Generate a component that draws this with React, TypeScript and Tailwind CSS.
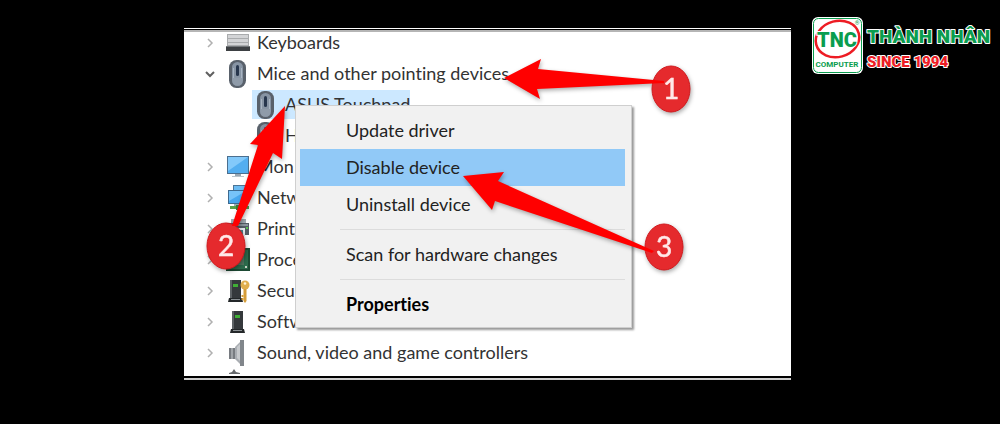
import { ReactNode } from 'react';

type IconName = 'keyboard' | 'mouse' | 'monitor' | 'network' | 'printer' | 'chip' | 'security' | 'software' | 'sound';

interface Device {
  name: string;
  icon: IconName;
  open?: boolean;
  children?: { name: string; selected?: boolean }[];
}

const devices: Device[] = [
  { name: 'Keyboards', icon: 'keyboard' },
  {
    name: 'Mice and other pointing devices',
    icon: 'mouse',
    open: true,
    children: [{ name: 'ASUS Touchpad', selected: true }, { name: 'H' }],
  },
  { name: 'Mon', icon: 'monitor' },
  { name: 'Netw', icon: 'network' },
  { name: 'Print', icon: 'printer' },
  { name: 'Proce', icon: 'chip' },
  { name: 'Secur', icon: 'security' },
  { name: 'Softw', icon: 'software' },
  { name: 'Sound, video and game controllers', icon: 'sound' },
];

const tower = (
  <>
    <path d="M6 3h11v18H6z" fill="#35393c" />
    <path d="M6 3h2v18H6z" fill="#5d6265" />
    <path d="M9 7h5v3H9z" fill="#3fae35" />
    <path d="M5 21h13l1 4H4z" fill="#24282a" />
    <path d="M7 22h9v1H7z" fill="#8a9093" />
  </>
);

const drawings: Record<IconName, ReactNode> = {
  keyboard: (
    <>
      <path d="M1 5h22v13H1z" fill="#a9abad" />
      <path d="M2 6h20v3H2zM2 10h20v3H2zM2 14h20v2H2z" fill="#d3d4d6" />
      <path d="M0 18h24v4H0z" fill="#3d4043" />
      <path d="M0 17h24v1H0z" fill="#73777a" />
    </>
  ),
  mouse: (
    <>
      <rect x="3" y="0" width="17" height="28" rx="7.5" fill="#59616b" />
      <rect x="6" y="2" width="11" height="24" rx="5.5" fill="#8794a4" />
      <path d="M6.500 16.500q5 3 10 0v4q0 5-5 5t-5-5z" fill="#8f9ba9" />
      <rect x="10" y="5" width="3" height="11" rx="1.500" fill="#27364d" />
      <path d="M7.500 8v10M15.500 8v10" stroke="#a9b5c2" />
    </>
  ),
  monitor: (
    <>
      <rect x="1.500" y="3.500" width="21" height="17" fill="#53aef0" stroke="#4b6f8f" />
      <path d="M2 4h20L2 18z" fill="#83c9fa" />
      <path d="M9 21h6v2H9z" fill="#9aa8b3" />
      <path d="M6 23h12v1H6z" fill="#bac4cb" />
    </>
  ),
  network: (
    <>
      <rect x="7.500" y="1.500" width="16" height="12" fill="#6cbcf3" stroke="#4d7595" />
      <rect x="2.500" y="6.500" width="19" height="13" fill="#48a7ee" stroke="#3e6a8f" />
      <path d="M3 7h17L3 17z" fill="#77c3f8" />
      <path d="M8 20h8v2H8z" fill="#9ba9b2" />
      <path d="M4 22h19v3H4z" fill="#57a34c" />
      <path d="M10 21h5v5h-5z" fill="#3c7f38" />
    </>
  ),
  printer: (
    <>
      <path d="M5 4h15v5H5z" fill="#a4adb4" />
      <path d="M1 8h22v12H1z" fill="#545d66" />
      <path d="M2 9h20v2H2z" fill="#8b959d" />
      <path d="M6 13h13v8H6z" fill="#e3e9ed" />
      <path d="M8 15h9v4H8z" fill="#4d7c86" />
      <path d="M20 12h2v2h-2z" fill="#5cc451" />
    </>
  ),
  chip: (
    <>
      <path d="M1 3h22v21H1z" fill="#2c6b4c" />
      <path d="M1 3h22v21H1z" fill="none" stroke="#1d4a34" strokeWidth="2" />
      <path d="M6 8h12v11H6z" fill="#52765f" />
      <path d="M3 5h2v2H3zM19 20h2v2h-2z" fill="#c7d3c4" />
    </>
  ),
  security: (
    <>
      <g transform="translate(-2 0)">{tower}</g>
      <circle cx="19" cy="8" r="4.500" fill="#e0ae4e" />
      <circle cx="19" cy="6.500" r="1.300" fill="#fff4d6" />
      <path d="M17.500 12h3v12l-1.500 2-1.500-2z" fill="#d69d38" />
      <path d="M15.500 18h2v2h-2zM15.500 21h2v2h-2z" fill="#d69d38" />
    </>
  ),
  software: tower,
  sound: (
    <>
      <path d="M3 9h6v11H3z" fill="#777b80" />
      <path d="M9 8l7-7v26l-7-7z" fill="#a9adb2" />
      <path d="M14 1h4v26h-4z" fill="#81868b" />
      <path d="M11 8l3-3v17l-3-3z" fill="#c6c9cc" />
      <path d="M5 9h2v11H5z" fill="#a0a4a8" />
    </>
  ),
};

function DeviceIcon({ name }: { name: IconName }) {
  return (
    <svg className="h-7 w-6 shrink-0 overflow-visible" viewBox="0 0 24 28" aria-hidden="true">
      {drawings[name]}
    </svg>
  );
}

function Chevron({ open }: { open?: boolean }) {
  return (
    <svg className="h-3 w-3" viewBox="0 0 12 12" fill="none" aria-hidden="true">
      {open ? (
        <path d="M2 4l4 4 4-4" stroke="#606060" strokeWidth="2" />
      ) : (
        <path d="M4 2l4 4-4 4" stroke="#b0b0b0" strokeWidth="1.500" />
      )}
    </svg>
  );
}

function DeviceTree() {
  return (
    <ul className="-mt-[5px] text-[18px] text-[#333]">
      {devices.map((device) => (
        <li key={device.name}>
          <div className="flex h-[31px] items-center pl-5">
            <button type="button" aria-label={`Toggle ${device.name}`} className="mr-2.5 w-3">
              <Chevron open={device.open} />
            </button>
            <DeviceIcon name={device.icon} />
            <span className="ml-[7px] whitespace-nowrap">{device.name}</span>
          </div>
          {device.children && (
            <ul className="pl-[68px]">
              {device.children.map((child) => (
                <li key={child.name} className="flex h-[31px] items-center">
                  <div className={`flex h-[29px] items-center pl-0.5 ${child.selected ? 'bg-[#cce8ff]' : ''}`}>
                    <DeviceIcon name="mouse" />
                    <span className="ml-[7px] whitespace-nowrap">{child.name}</span>
                  </div>
                </li>
              ))}
            </ul>
          )}
        </li>
      ))}
      <li className="h-2 pl-[42px]">
        <svg className="h-2 w-6" viewBox="0 0 24 8" aria-hidden="true">
          <path d="M3 5l3-1 2-3 2 3 4 1v1H3z" fill="#66696c" />
        </svg>
      </li>
    </ul>
  );
}

function MenuItem({ children, className = '' }: { children: ReactNode; className?: string }) {
  return (
    <button type="button" role="menuitem" className={`block h-[37px] w-full pl-[46px] text-left whitespace-nowrap ${className}`}>
      {children}
    </button>
  );
}

function ContextMenu() {
  return (
    <div
      role="menu"
      className="absolute top-[73px] left-[111px] w-[337px] border border-[#cfcfcf] bg-[#f1f1f1] pt-1.5 pr-1.5 pb-1 pl-1 text-[18px] text-[#222] shadow-[2px_2px_2px_#999]"
    >
      <MenuItem>Update driver</MenuItem>
      <MenuItem className="bg-[#91c9f7]">Disable device</MenuItem>
      <MenuItem>Uninstall device</MenuItem>
      <hr className="my-1.5 ml-10 border-[#dcdcdc]" />
      <MenuItem>Scan for hardware changes</MenuItem>
      <hr className="my-1.5 ml-10 border-[#dcdcdc]" />
      <MenuItem className="font-bold text-black">Properties</MenuItem>
    </div>
  );
}

const steps = [
  { label: '1', cx: 487, cy: 57, arrow: '320,46 357,27 354,37 480,49 480,51 353,57 356,67' },
  { label: '2', cx: 42, cy: 214, arrow: '101,74 66,112 74,113 48,194 54,194 89,121 98,127' },
  { label: '3', cx: 480, cy: 215, arrow: '279,144 320,140 314,149 470,219 468,221 311,169 308,178' },
];

function Annotations() {
  return (
    <svg className="pointer-events-none absolute top-0 left-0 h-[345px] w-[607px] drop-shadow-[1px_2px_2px_#00000055]" viewBox="0 0 607 345">
      {steps.map((step) => (
        <g key={step.label}>
          <ellipse cx={step.cx} cy={step.cy} rx="19" ry="23" fill="#e52a2d" stroke="#d1181c" />
          <polygon points={step.arrow} fill="#ff0000" />
          <text x={step.cx} y={step.cy + 10} textAnchor="middle" fontSize="28" fill="#ffe9e9" stroke="#ffe9e9" strokeWidth="0.500">
            {step.label}
          </text>
        </g>
      ))}
    </svg>
  );
}

function Logo() {
  return (
    <div className="flex items-start gap-1">
      <svg className="h-[57px] w-[51px] shrink-0" viewBox="0 0 51 57" fontFamily="Roboto, sans-serif" textAnchor="middle">
        <rect width="51" height="57" rx="6" fill="#fff" />
        <rect x="1.500" y="1.500" width="48" height="54" rx="5" fill="none" stroke="#0a9d4f" />
        <ellipse cx="25.500" cy="22" rx="22" ry="18" fill="none" stroke="#ed1c24" strokeWidth="2.500" transform="rotate(-15 25.500 22)" />
        <text x="25" y="30" fontSize="20" fontWeight="900" fill="#0a9d4f" stroke="#fff" strokeWidth="2" paintOrder="stroke">
          TNC
        </text>
        <text x="25" y="50" fontSize="8" fontWeight="700" fill="#0a9d4f">
          COMPUTER
        </text>
        <text x="45" y="8" fontSize="6" fill="#0a9d4f">
          ®
        </text>
      </svg>
      <svg className="h-[57px] w-[126px] shrink-0 overflow-visible" viewBox="0 0 126 57" fontFamily="Roboto, sans-serif" fontWeight="900" stroke="#fff" strokeWidth="2" paintOrder="stroke" strokeLinejoin="round">
        <text x="0" y="26" fontSize="19" fill="#0a9d4f">
          THÀNH NHÂN
        </text>
        <text x="0" y="50" fontSize="15" fill="#ed1c24">
          SINCE 1994
        </text>
      </svg>
    </div>
  );
}

export default function App() {
  return (
    <div className="grid min-h-screen grid-cols-[184px_1fr_209px] items-start bg-black font-['Lato','Noto_Sans',sans-serif] [font-variant-ligatures:none]">
      <main className="col-start-2 mt-7 border-t border-b-2 border-t-white border-b-[#ccc]">
        <div className="border-t border-b-2 border-black">
          <div className="relative border-t-2 border-[#b5b5b5] bg-white">
            <div className="overflow-hidden">
              <DeviceTree />
            </div>
            <ContextMenu />
            <Annotations />
          </div>
        </div>
      </main>
      <header className="pt-[17px] pl-[21px]">
        <Logo />
      </header>
    </div>
  );
}
